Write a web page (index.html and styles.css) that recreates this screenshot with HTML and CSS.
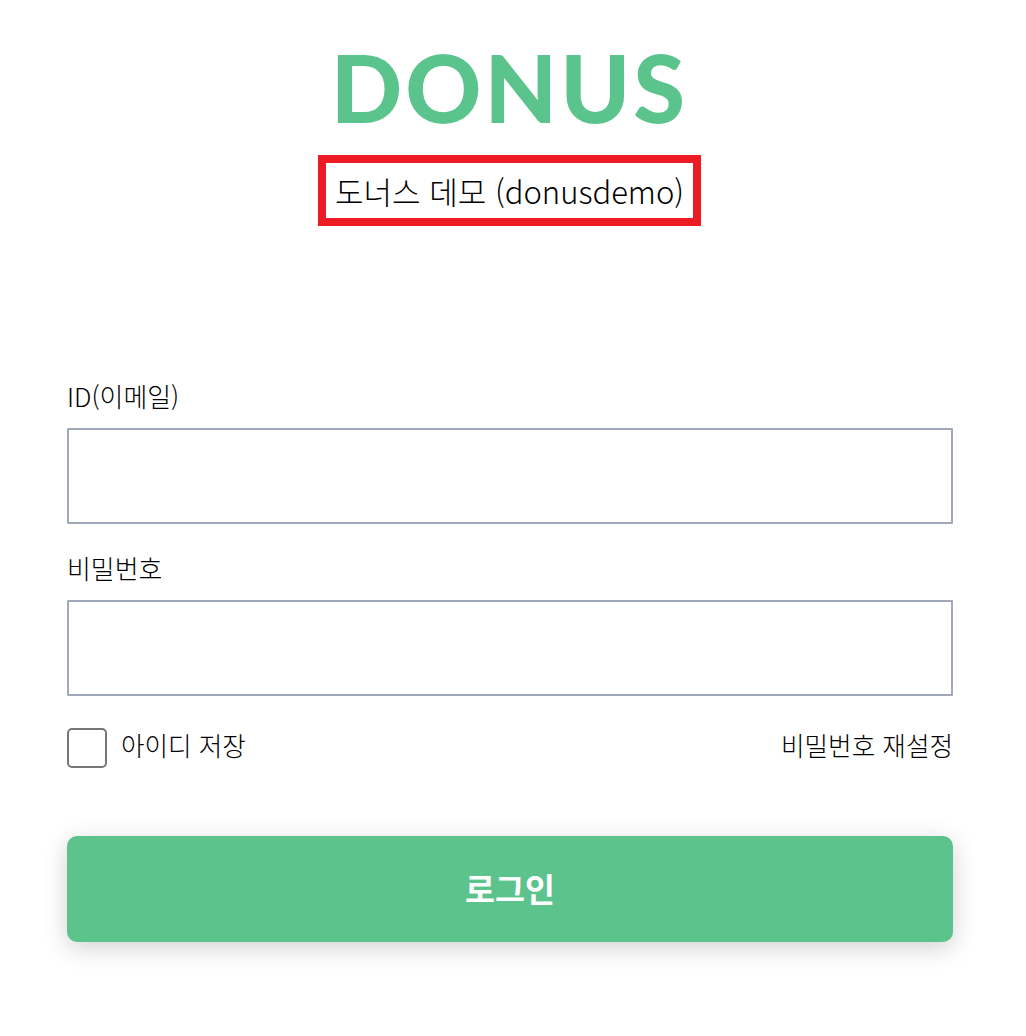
FILE: index.html
```html
<!DOCTYPE html>
<html lang="ko">
<head>
<meta charset="utf-8">
<title>DONUS</title>
<link rel="stylesheet" href="styles.css">
</head>
<body>
<main class="page">
  <header class="brand">
    <div class="logo">DONUS</div>
    <div class="org"><span class="org-name">도너스 데모 (donusdemo)</span></div>
  </header>
  <form class="form">
    <label class="label" for="id">ID(이메일)</label>
    <input class="input" id="id" type="text">
    <label class="label label-second" for="pw">비밀번호</label>
    <input class="input" id="pw" type="password">
    <div class="options">
      <label class="remember"><input class="check" type="checkbox"><span class="option-text">아이디 저장</span></label>
      <a class="reset option-text">비밀번호 재설정</a>
    </div>
    <button class="submit" type="button">로그인</button>
  </form>
</main>
</body>
</html>
```
FILE: styles.css
```css
* { box-sizing: border-box; }
html, body { margin: 0; background: #fff; }
body { font-family: "Noto Sans CJK KR", "Noto Sans", sans-serif; color: #000; }
.page { width: 1026px; height: 1036px; padding: 0 73px 0 67px; overflow: hidden; }
.brand { display: flex; flex-direction: column; align-items: center; padding-top: 40px; padding-right: 1px; }
.logo {
  font-family: Lato, sans-serif; font-weight: 900; font-size: 94px; line-height: 94px; height: 96px;
  letter-spacing: 3px; color: #5bc48c; filter: blur(0.6px); white-space: nowrap;
}
.org {
  margin-top: 19px; width: 383px; height: 71px; border: 8px solid #ed1c24;
  display: flex; align-items: center; justify-content: center; background: #fff;
}
.org-name { font-size: 31px; line-height: 40px; color: #000; font-weight: 300; white-space: nowrap; }
.form { display: flex; flex-direction: column; margin-top: 152px; }
.label { font-size: 25.9px; line-height: 36px; height: 50px; font-weight: 300; }
.label-second { margin-top: 26px; }
.input { width: 100%; height: 96px; border: 2px solid #a0a9ba; background: #fff; border-radius: 1px; outline: none; }
.options { display: flex; justify-content: space-between; align-items: center; margin-top: 32px; height: 40px; font-size: 25.6px; font-weight: 300; }
.remember { display: flex; align-items: center; gap: 14px; }
.option-text { display: block; line-height: 34px; height: 40px; }
.check { appearance: none; margin: 0; width: 40px; height: 40px; border: 2px solid #767676; border-radius: 5px; background: #fff; }
.reset { color: #000; }
.submit {
  margin-top: 68px; height: 106px; padding: 0 0 4px; border: 0; border-radius: 10px; background: #5bc38b; color: #fff;
  font-family: inherit; font-size: 32.6px; font-weight: 700; box-shadow: 0 6px 24px rgba(0,0,0,.18);
}
```
